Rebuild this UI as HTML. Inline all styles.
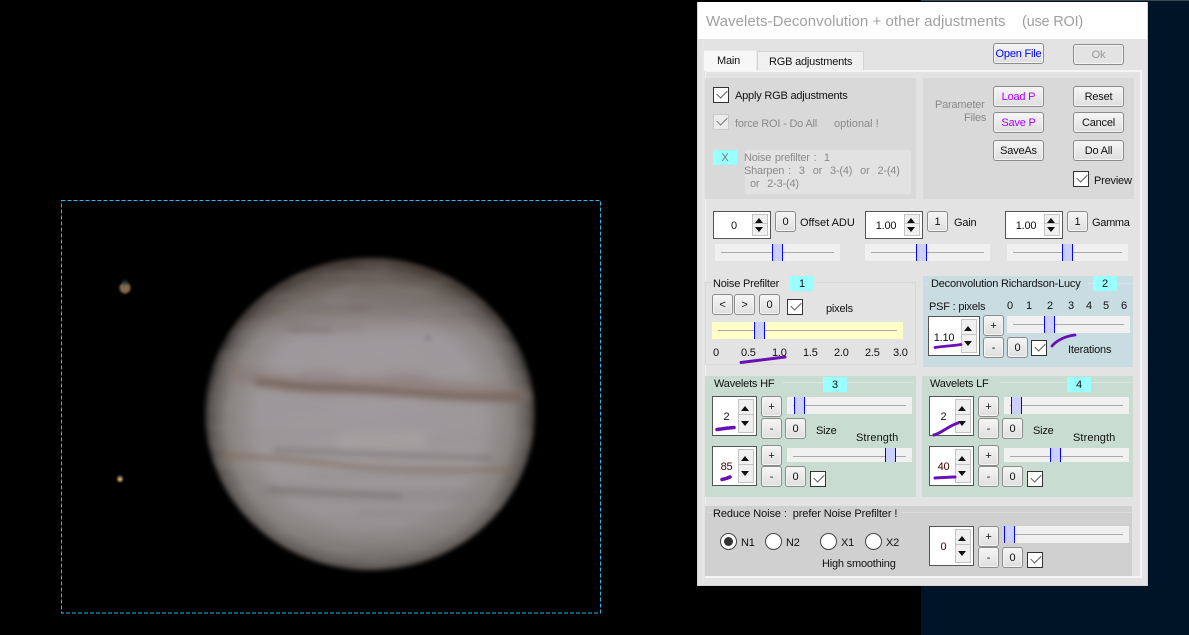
<!DOCTYPE html>
<html><head><meta charset="utf-8"><style>
html,body{margin:0;padding:0;width:1189px;height:635px;overflow:hidden;background:#000}
body{position:relative;font:11px "Liberation Sans",sans-serif;letter-spacing:-.2px;color:#111}
div,span,svg{position:absolute;box-sizing:border-box}
.t{white-space:nowrap;line-height:14px;margin-top:1px}
.g{color:#8a8a8a}
.p{background:#d9d9d9}
.b{border:1px solid #8c8c8c;border-radius:3px;background:linear-gradient(#f6f6f6,#dedede);text-align:center;line-height:20px;height:21px;width:21px;white-space:nowrap;box-shadow:inset 0 0 0 1px #f4f4f4}
.w{width:51px}
.cy{background:#9ff;width:24px;height:15px;text-align:center;line-height:16px}
.c{width:16px;height:16px;background:#fff;border:1px solid #333}
.c::after{content:"";position:absolute;left:3px;top:2px;width:9px;height:5px;border-left:1.6px solid #555;border-bottom:1.6px solid #555;transform:rotate(-45deg)}
.s{height:17px;background:#f0f0f0}
.s::before{content:"";position:absolute;left:6px;right:6px;top:8px;height:1px;background:#aaa}
.h{top:0;bottom:0;width:11px;background:#ccd0ff;border-left:1px solid #00f;border-right:1px solid #00f}
.sp{background:#fff;border:1px solid #555;text-align:center}
.sp .v{left:0;right:16px;top:50%;margin-top:-6px;line-height:14px;height:14px}
.u,.d{right:2px;width:14px;border:1px solid #c4c4c4;background:#f0f0f0}
.u{top:2px;height:calc(50% - 2px)}
.d{bottom:2px;height:calc(50% - 2px)}
.u::after,.d::after{content:"";position:absolute;left:2px;top:50%;margin-top:-3px;border-left:4px solid transparent;border-right:4px solid transparent}
.u::after{border-bottom:5px solid #111}
.d::after{border-top:5px solid #111}
.r{width:17px;height:17px;border-radius:50%;background:#fff;border:1px solid #444}
</style></head><body>

<div style="left:0;top:0;width:1189px;height:1px;background:#40464f"></div>
<div style="left:921px;top:1px;width:268px;height:634px;background:#001428"></div>

<svg width="921" height="635" style="left:0;top:0" viewBox="0 0 921 635">
<defs>
<radialGradient id="pg" cx="0.5" cy="0.52" r="0.5">
<stop offset="0" stop-color="#a19b9d"/><stop offset="0.68" stop-color="#9c9799"/><stop offset="0.86" stop-color="#87827f"/><stop offset="0.96" stop-color="#5a5552"/><stop offset="1" stop-color="#2a2725"/>
</radialGradient>
<linearGradient id="tp" x1="0" y1="0" x2="0" y2="1">
<stop offset="0" stop-color="#5a4c44" stop-opacity=".6"/><stop offset="0.18" stop-color="#6a5d55" stop-opacity=".4"/><stop offset="0.28" stop-color="#a9a4b0" stop-opacity=".1"/><stop offset="0.72" stop-color="#a9a4a8" stop-opacity="0"/><stop offset="1" stop-color="#4e4a44" stop-opacity=".4"/>
</linearGradient>
<filter id="b1" x="-20%" y="-200%" width="140%" height="500%"><feGaussianBlur stdDeviation="2.3"/></filter>
<filter id="b2" x="-20%" y="-200%" width="140%" height="500%"><feGaussianBlur stdDeviation="5"/></filter>
<filter id="b3" x="-10%" y="-10%" width="120%" height="120%"><feGaussianBlur stdDeviation="2.4"/></filter>
<filter id="b4" x="-60%" y="-60%" width="220%" height="220%"><feGaussianBlur stdDeviation="1"/></filter>
<filter id="nz" x="0" y="0" width="100%" height="100%"><feTurbulence type="fractalNoise" baseFrequency="0.025 0.14" numOctaves="3" seed="7"/><feColorMatrix values="0 0 0 0 .36  0 0 0 0 .33  0 0 0 0 .33  1.6 0 0 0 -.62"/></filter>
<clipPath id="cp"><ellipse cx="370" cy="414" rx="165" ry="156"/></clipPath>
</defs>
<rect width="921" height="635" fill="#000"/>
<g filter="url(#b3)">
<ellipse cx="370" cy="414" rx="165" ry="156" fill="url(#pg)"/>
<g clip-path="url(#cp)">
<ellipse cx="370" cy="414" rx="165" ry="156" fill="url(#tp)"/>
<rect x="205" y="258" width="330" height="312" filter="url(#nz)" opacity=".25"/>
<g filter="url(#b2)" fill="none" stroke-linecap="round">
<path d="M235 374C270 378 300 388 340 386S400 384 440 388 500 392 525 396" stroke="#85736a" stroke-width="14" opacity=".6"/>
<path d="M300 376C320 372 335 374 345 380M385 380C400 374 420 376 435 384" stroke="#8f8084" stroke-width="8" opacity=".6"/>
<path d="M280 326H360" stroke="#7d7270" stroke-width="8" opacity=".4"/>
<path d="M310 308H420" stroke="#766a66" stroke-width="6" opacity=".35"/>
<path d="M260 408H330M340 420H430" stroke="#8b93a0" stroke-width="8" opacity=".3"/>
<path d="M340 440H420" stroke="#bab5b0" stroke-width="10" opacity=".4"/>
<path d="M260 490C320 494 400 500 470 494" stroke="#7e787a" stroke-width="9" opacity=".5"/>
<path d="M300 516H470" stroke="#8a8686" stroke-width="4" opacity=".35"/>
<path d="M240 434H400M430 438H520" stroke="#8a868c" stroke-width="5" opacity=".3"/>
</g>
<g filter="url(#b1)" fill="none" stroke-linecap="round">
<path d="M258 382C280 384 300 388 325 388S370 390 410 393 480 398 520 397" stroke="#75625a" stroke-width="8" opacity=".8"/>
<path d="M225 456C270 456 310 462 350 466S440 470 510 470" stroke="#7f6c58" stroke-width="3.800" opacity=".8"/>
<path d="M275 450C330 452 400 456 490 458" stroke="#6c6667" stroke-width="3.400" opacity=".65"/>
<path d="M270 490C320 492 350 494 400 496" stroke="#6a6260" stroke-width="3.400" opacity=".6"/>
<path d="M310 475H470M360 514H460" stroke="#7a7777" stroke-width="2.400" opacity=".5"/>
<path d="M350 308H368M290 330H330" stroke="#5f5450" stroke-width="3.500" opacity=".4"/>
</g>
<circle cx="428" cy="338" r="2" fill="#5e5454" opacity=".6" filter="url(#b4)"/>
</g>
</g>
<circle cx="125" cy="288" r="5.500" fill="#84684c" filter="url(#b4)"/>
<circle cx="125" cy="282.500" r="3" fill="#1d3a50" opacity=".6" filter="url(#b4)"/>
<circle cx="120" cy="479" r="2.600" fill="#f0b858" filter="url(#b4)"/>
<circle cx="120" cy="476.500" r="1.600" fill="#27508a" opacity=".7" filter="url(#b4)"/>
<rect x="61.500" y="200.500" width="539" height="412.500" fill="none" stroke="#2bb6ee" stroke-width="1" stroke-dasharray="4 2"/>
</svg>

<!-- window -->
<div style="left:697px;top:2px;width:451px;height:584px;background:#e3e3e3;border:1px solid #d4d4d4"></div>
<div style="left:698px;top:2px;width:449px;height:37px;background:#fff"></div>
<div class="t" style="left:706px;top:12px;font-size:15px;letter-spacing:.05px;line-height:18px;color:#a0a0a0">Wavelets-Deconvolution + other adjustments</div>
<div class="t" style="left:1022px;top:12px;font-size:14.500px;letter-spacing:-.2px;line-height:18px;color:#a0a0a0">(use ROI)</div>

<!-- tab pane -->
<div style="left:705px;top:70px;width:437px;height:508px;border:2px solid #f4f4f4;border-left:1px solid #f0f0f0;background:#e3e3e3"></div>
<div style="left:703px;top:50px;width:54px;height:21px;background:#f7f7f7;border:1px solid #e9e9e9;border-bottom:0"></div>
<div class="t" style="left:717px;top:53px">Main</div>
<div style="left:757px;top:51px;width:107px;height:19px;background:#f0f0f0;border:1px solid #d4d4d4;border-bottom:0"></div>
<div class="t" style="left:769px;top:54px">RGB adjustments</div>
<div class="b w" style="left:993px;top:43px;color:#00f">Open File</div>
<div class="b w" style="left:1073px;top:44px;color:#999;background:#e3e3e3">Ok</div>

<!-- panel 1 -->
<div class="p" style="left:705px;top:78px;width:211px;height:121px"></div>
<div class="c" style="left:713px;top:87px"></div>
<div class="t" style="left:735px;top:88px">Apply RGB adjustments</div>
<div class="c" style="left:713px;top:114px;background:#f2f2f2;border-color:#c4c4c4;opacity:.75"></div>
<div class="t g" style="left:735px;top:116px">force ROI - Do All</div>
<div class="t g" style="left:834px;top:116px;letter-spacing:0">optional !</div>
<div class="cy" style="left:713px;top:150px;color:#777">X</div>
<div style="left:745px;top:150px;width:166px;height:44px;background:#e2e2e2"></div>
<div class="t g" style="left:744px;top:150px;word-spacing:.9px">Noise prefilter : &nbsp;1</div>
<div class="t g" style="left:744px;top:163px;word-spacing:1.100px">Sharpen : &nbsp;3 &nbsp;or &nbsp;3-(4) &nbsp;or &nbsp;2-(4)</div>
<div class="t g" style="left:750px;top:176px;word-spacing:1.100px">or &nbsp;2-3-(4)</div>

<!-- panel 2 -->
<div class="p" style="left:923px;top:78px;width:211px;height:121px"></div>
<div class="t g" style="left:935px;top:97px">Parameter</div>
<div class="t g" style="left:964px;top:110px">Files</div>
<div class="b w" style="left:993px;top:86px;color:#a0f">Load P</div>
<div class="b w" style="left:993px;top:112px;color:#a0f">Save P</div>
<div class="b w" style="left:993px;top:140px">SaveAs</div>
<div class="b w" style="left:1073px;top:86px">Reset</div>
<div class="b w" style="left:1073px;top:112px">Cancel</div>
<div class="b w" style="left:1073px;top:140px">Do All</div>
<div class="c" style="left:1073px;top:171px"></div>
<div class="t" style="left:1094px;top:173px">Preview</div>

<!-- offset gain gamma -->
<div class="sp" style="left:713px;top:211px;width:58px;height:28px"><span class="v">0</span><i class="u" style="position:absolute"></i><i class="d" style="position:absolute"></i></div>
<div class="b" style="left:775px;top:211px">0</div>
<div class="t" style="left:800px;top:215px;letter-spacing:0">Offset ADU</div>
<div class="s" style="left:715px;top:244px;width:125px"><div class="h" style="left:57px"></div></div>

<div class="sp" style="left:865px;top:211px;width:58px;height:28px"><span class="v">1.00</span><i class="u" style="position:absolute"></i><i class="d" style="position:absolute"></i></div>
<div class="b" style="left:927px;top:211px">1</div>
<div class="t" style="left:954px;top:215px">Gain</div>
<div class="s" style="left:865px;top:244px;width:125px"><div class="h" style="left:51px"></div></div>

<div class="sp" style="left:1005px;top:211px;width:58px;height:28px"><span class="v">1.00</span><i class="u" style="position:absolute"></i><i class="d" style="position:absolute"></i></div>
<div class="b" style="left:1067px;top:211px">1</div>
<div class="t" style="left:1092px;top:215px;letter-spacing:-.3px">Gamma</div>
<div class="s" style="left:1007px;top:244px;width:121px"><div class="h" style="left:55px"></div></div>

<!-- noise prefilter -->
<div style="left:705px;top:282px;width:211px;height:83px;border:1px solid #d8d8d8"></div>
<div style="left:711px;top:276px;width:104px;height:12px;background:#e3e3e3"></div>
<div class="t" style="left:713px;top:276px">Noise Prefilter</div>
<div class="cy" style="left:790px;top:276px">1</div>
<div class="b" style="left:712px;top:294px">&lt;</div>
<div class="b" style="left:734px;top:294px">&gt;</div>
<div class="b" style="left:759px;top:294px">0</div>
<div class="c" style="left:787px;top:299px"></div>
<div class="t" style="left:826px;top:301px">pixels</div>
<div class="s" style="left:712px;top:322px;width:191px;background:#ffffc8"><div class="h" style="left:42px"></div></div>
<div class="t" style="left:713px;top:345px">0</div>
<div class="t" style="left:741px;top:345px">0.5</div>
<div class="t" style="left:772px;top:345px">1.0</div>
<div class="t" style="left:803px;top:345px">1.5</div>
<div class="t" style="left:834px;top:345px">2.0</div>
<div class="t" style="left:865px;top:345px">2.5</div>
<div class="t" style="left:893px;top:345px">3.0</div>

<!-- deconvolution -->
<div style="left:923px;top:276px;width:210px;height:91px;background:#c8dce2"></div>
<div style="left:926px;top:283px;width:206px;height:1px;background:#d6e4e8"></div>
<div style="left:928px;top:276px;width:160px;height:14px;background:#c8dce2"></div>
<div class="t" style="left:931px;top:276px">Deconvolution Richardson-Lucy</div>
<div class="cy" style="left:1093px;top:276px">2</div>
<div class="t" style="left:929px;top:299px">PSF : pixels</div>
<div class="t" style="left:1007px;top:298px">0</div>
<div class="t" style="left:1026px;top:298px">1</div>
<div class="t" style="left:1047px;top:298px">2</div>
<div class="t" style="left:1068px;top:298px">3</div>
<div class="t" style="left:1086px;top:298px">4</div>
<div class="t" style="left:1103px;top:298px">5</div>
<div class="t" style="left:1121px;top:298px">6</div>
<div class="sp" style="left:928px;top:316px;width:52px;height:40px"><span class="v" style="margin-top:-5px;right:20px">1.10</span><i class="u" style="position:absolute"></i><i class="d" style="position:absolute"></i></div>
<div class="b" style="left:983px;top:315px">+</div>
<div class="b" style="left:983px;top:337px">-</div>
<div class="b" style="left:1007px;top:337px">0</div>
<div class="c" style="left:1031px;top:340px"></div>
<div class="s" style="left:1007px;top:316px;width:123px"><div class="h" style="left:37px"></div></div>
<div class="t" style="left:1068px;top:342px">Iterations</div>

<!-- HF -->
<div style="left:705px;top:376px;width:211px;height:121px;background:#c8dcd2"></div>
<div style="left:710px;top:382px;width:204px;height:1px;background:#d8e4dc"></div>
<div style="left:712px;top:376px;width:70px;height:14px;background:#c8dcd2"></div>
<div class="t" style="left:714px;top:376px">Wavelets HF</div>
<div class="cy" style="left:823px;top:377px">3</div>
<div class="sp" style="left:712px;top:396px;width:45px;height:40px"><span class="v" style="margin-top:-6px">2</span><i class="u" style="position:absolute"></i><i class="d" style="position:absolute"></i></div>
<div class="b" style="left:761px;top:396px">+</div>
<div class="b" style="left:761px;top:418px">-</div>
<div class="b" style="left:785px;top:418px">0</div>
<div class="s" style="left:787px;top:397px;width:125px"><div class="h" style="left:7px"></div></div>
<div class="t" style="left:816px;top:423px">Size</div>
<div class="t" style="left:856px;top:430px;letter-spacing:.1px">Strength</div>
<div class="sp" style="left:712px;top:446px;width:45px;height:40px"><span class="v" style="margin-top:-6px;color:#400">85</span><i class="u" style="position:absolute"></i><i class="d" style="position:absolute"></i></div>
<div class="b" style="left:761px;top:445px">+</div>
<div class="b" style="left:761px;top:466px">-</div>
<div class="b" style="left:785px;top:466px">0</div>
<div class="s" style="left:787px;top:448px;width:125px;height:14px"><div class="h" style="left:98px"></div></div>
<div class="c" style="left:810px;top:471px"></div>

<!-- LF -->
<div style="left:922px;top:376px;width:211px;height:121px;background:#c8dcd2"></div>
<div style="left:927px;top:382px;width:204px;height:1px;background:#d8e4dc"></div>
<div style="left:929px;top:376px;width:70px;height:14px;background:#c8dcd2"></div>
<div class="t" style="left:930px;top:376px">Wavelets LF</div>
<div class="cy" style="left:1067px;top:377px">4</div>
<div class="sp" style="left:929px;top:396px;width:45px;height:40px"><span class="v" style="margin-top:-6px">2</span><i class="u" style="position:absolute"></i><i class="d" style="position:absolute"></i></div>
<div class="b" style="left:978px;top:396px">+</div>
<div class="b" style="left:978px;top:418px">-</div>
<div class="b" style="left:1002px;top:418px">0</div>
<div class="s" style="left:1004px;top:397px;width:125px"><div class="h" style="left:7px"></div></div>
<div class="t" style="left:1033px;top:423px">Size</div>
<div class="t" style="left:1073px;top:430px;letter-spacing:.1px">Strength</div>
<div class="sp" style="left:929px;top:446px;width:45px;height:40px"><span class="v" style="margin-top:-6px;color:#400">40</span><i class="u" style="position:absolute"></i><i class="d" style="position:absolute"></i></div>
<div class="b" style="left:978px;top:445px">+</div>
<div class="b" style="left:978px;top:466px">-</div>
<div class="b" style="left:1002px;top:466px">0</div>
<div class="s" style="left:1004px;top:448px;width:125px;height:14px"><div class="h" style="left:46px"></div></div>
<div class="c" style="left:1027px;top:471px"></div>

<!-- reduce noise -->
<div style="left:705px;top:506px;width:427px;height:70px;background:#d0d0d0"></div>
<div style="left:708px;top:512px;width:423px;height:1px;background:#dcdcdc"></div>
<div style="left:711px;top:506px;width:190px;height:14px;background:#d0d0d0"></div>
<div class="t" style="left:713px;top:506px;letter-spacing:-.1px">Reduce Noise : &nbsp;prefer Noise Prefilter !</div>
<div class="r" style="left:720px;top:533px"></div>
<div style="left:724px;top:537px;width:9px;height:9px;border-radius:50%;background:#333"></div>
<div class="t" style="left:741px;top:535px">N1</div>
<div class="r" style="left:765px;top:533px"></div>
<div class="t" style="left:786px;top:535px">N2</div>
<div class="r" style="left:820px;top:533px"></div>
<div class="t" style="left:841px;top:535px">X1</div>
<div class="r" style="left:865px;top:533px"></div>
<div class="t" style="left:886px;top:535px">X2</div>
<div class="t" style="left:822px;top:556px">High smoothing</div>
<div class="sp" style="left:929px;top:526px;width:45px;height:40px"><span class="v" style="color:#400">0</span><i class="u" style="position:absolute"></i><i class="d" style="position:absolute"></i></div>
<div class="b" style="left:978px;top:526px">+</div>
<div class="b" style="left:978px;top:547px">-</div>
<div class="b" style="left:1002px;top:547px">0</div>
<div class="s" style="left:1004px;top:526px;width:125px"><div class="h" style="left:0"></div></div>
<div class="c" style="left:1027px;top:552px"></div>

<!-- purple marks -->
<svg width="1189" height="635" style="left:0;top:0" fill="none" stroke="#6a0fb8" stroke-linecap="round">
<path d="M741 362.500 785 357" stroke-width="3"/>
<path d="M935 347.500C945 346 952 346 961 344.500" stroke-width="2.800"/>
<path d="M1052 346C1057 340 1066 336 1075 335" stroke-width="2.800"/>
<path d="M717 429.500C724 428.500 728 428 734 427.500" stroke-width="3.500"/>
<path d="M722 479.500C725 479 728 478 730 477" stroke-width="3.500"/>
<path d="M934 435C942 433 948 426 958 423" stroke-width="3"/>
<path d="M935 478C943 477.500 950 477 955 477" stroke-width="3"/>
</svg>
</body></html>
